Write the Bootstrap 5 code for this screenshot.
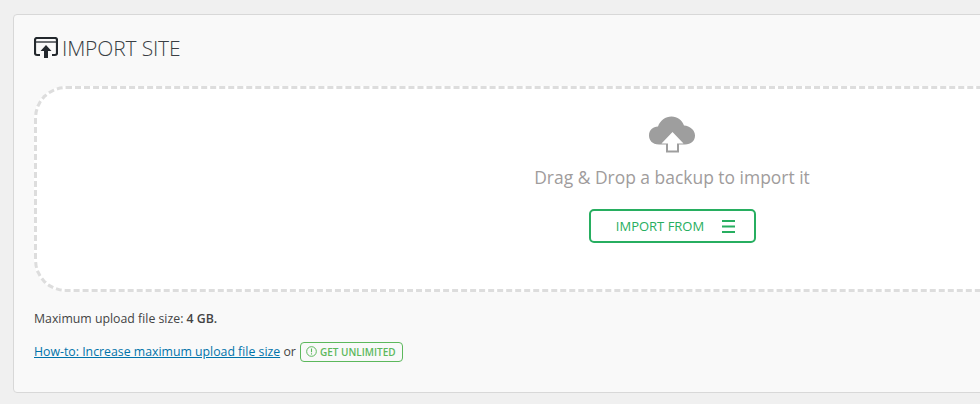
<!DOCTYPE html>
<html lang="en">
<head>
<meta charset="utf-8">
<title>Import site</title>
<link rel="stylesheet" href="https://cdn.jsdelivr.net/npm/bootstrap@5.3.0/dist/css/bootstrap.min.css">
<style>
html,body{height:404px;overflow:hidden}
body{background:#f0f0f0;font-family:"Open Sans","Noto Sans",sans-serif;font-size:12.3px;color:#444}
.page-wrap{padding:14px 0 0 13px;width:1400px}
.panel-box{width:1340px;height:379px;background:#f9f9f9;border:1px solid #d8d8d8;border-radius:4px;padding:19px 20px}
.panel-title{font-size:21px;font-weight:300;line-height:28px;color:#3a3f44;margin:0 0 24px;letter-spacing:-.15px;gap:4px}
.drop-area{height:206px;width:1276px;background:#fff;border:3px dashed #ddd;border-radius:32px;padding-top:27px}
.cloud-ico{display:block;margin:0 auto}
.drop-text{font-size:17.45px;line-height:24px;color:#a09c9c;margin:11px 0 20px}
.import-btn{width:167px;height:34px;border:2px solid #27ae60;border-radius:5px;background:#fff;color:#27ae60;font-size:13px;font-weight:500;padding:1px 0 0 7px;gap:18px}
.import-btn:hover{background:#fff;color:#27ae60;border-color:#27ae60}
.burger{width:13px;height:13px;flex:none}
.size-line{margin:17px 0 0;line-height:20px}
.size-line strong{font-weight:600}
.howto-line{margin:11px 0 0;line-height:24px}
.howto-line a{color:#0073aa}
.unlim-tag{height:20px;border:1px solid #5cb85c;border-radius:4px;color:#5cb85c;font-size:10px;font-weight:600;padding:0 5px;vertical-align:middle;position:relative;top:-1px;margin-left:1px;width:103px;gap:3px}
</style>
</head>
<body>
<div class="page-wrap">
  <div class="panel-box">
    <h1 class="panel-title d-flex align-items-center">
      <svg width="24" height="22" viewBox="0 0 24 22" aria-hidden="true"><path d="M6 18H3a2 2 0 0 1-2-2V3a2 2 0 0 1 2-2h18a2 2 0 0 1 2 2v13a2 2 0 0 1-2 2h-3" fill="none" stroke="#23282d" stroke-width="2.200"/><path d="M2 5h20" stroke="#23282d" stroke-width="1.300"/><path d="M12 8l5.500 6h-3.500v7h-4v-7H6.500z" fill="#23282d"/></svg>
      <span>IMPORT SITE</span>
    </h1>
    <div class="drop-area text-center">
      <svg class="cloud-ico" width="48" height="38" viewBox="0 0 48 38" aria-hidden="true"><path d="M11 28.500C4 28.500 1 24 1 19.500 1 14 5 10.500 10 10.500 12 4.500 17.500 .500 23.500 .500 29.500 .500 34 4 36 9.500 42 10 47 14 47 19.500 47 25 43 28.500 37 28.500z" fill="#9e9e9e"/><path d="M18 27h13v9.500H18z" fill="#9e9e9e"/><path d="M24.500 16L35.500 27.500H29v7h-9v-7h-6.500z" fill="#fff"/></svg>
      <p class="drop-text">Drag &amp; Drop a backup to import it</p>
      <button type="button" class="btn import-btn d-inline-flex align-items-center justify-content-center">
        <span>IMPORT FROM</span>
        <svg class="burger" viewBox="0 0 13 13" aria-hidden="true"><path d="M0 1h13M0 6.500h13M0 12h13" stroke="#27ae60" stroke-width="2"/></svg>
      </button>
    </div>
    <p class="size-line">Maximum upload file size: <strong>4 GB.</strong></p>
    <p class="howto-line"><a href="#">How-to: Increase maximum upload file size</a> or <span class="unlim-tag d-inline-flex align-items-center"><svg width="11" height="11" viewBox="0 0 10 10" aria-hidden="true"><circle cx="5" cy="5" r="4.400" fill="none" stroke="#5cb85c" stroke-width=".9"/><path d="M5 2.300v3.300M5 6.700v1.100" stroke="#5cb85c" stroke-width="1"/></svg>GET UNLIMITED</span></p>
  </div>
</div>
<script src="https://cdn.jsdelivr.net/npm/bootstrap@5.3.0/dist/js/bootstrap.bundle.min.js"></script>
</body>
</html>
